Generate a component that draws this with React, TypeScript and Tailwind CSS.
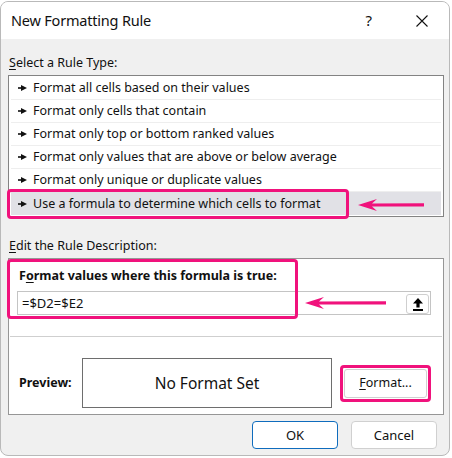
import React from 'react';

const PINK = '#f0127c';

const ruleTypes = [
  'Format all cells based on their values',
  'Format only cells that contain',
  'Format only top or bottom ranked values',
  'Format only values that are above or below average',
  'Format only unique or duplicate values',
  'Use a formula to determine which cells to format',
];

function Pointer() {
  return (
    <svg width="9" height="6" viewBox="0 0 9 6" className="shrink-0">
      <rect x="0" y="2.2" width="4" height="1.6" fill="#111" />
      <polygon points="3,0 9,3 3,6" fill="#111" />
    </svg>
  );
}

function PinkArrow({ width }: { width: number }) {
  return (
    <svg width={width} height="14" viewBox={`0 0 ${width} 14`}>
      <path
        d={`M0 7 L19 1 L14 5.4 L${width} 5.2 L${width} 8.6 L14 8.6 L19 13 Z`}
        fill={PINK}
      />
    </svg>
  );
}

function UploadIcon() {
  return (
    <svg width="10" height="13" viewBox="0 0 10 13">
      <polygon points="5,0 10,5.5 6.6,5.5 6.6,9.5 3.4,9.5 3.4,5.5 0,5.5" fill="#000" />
      <rect x="0" y="11" width="10" height="2" fill="#000" />
    </svg>
  );
}

export default function App() {
  return (
    <div
      className="w-[452px] h-[458px] bg-white pt-[1px] relative overflow-hidden"
      style={{ fontFamily: '"Noto Sans", "Open Sans", sans-serif' }}
    >
      <div className="w-[450px] h-[455px] rounded-[8px] border border-[#b9b9b9] overflow-hidden bg-[#f0f0f0] flex flex-col text-[#111]">
        {/* title bar */}
        <div className="h-[37px] bg-white flex items-center pl-[10px] shrink-0">
          <span className="text-[14.5px] tracking-[-0.2px]">New Formatting Rule</span>
          <span className="ml-auto mr-[44px] text-[15px]">?</span>
          <svg width="12" height="12" viewBox="0 0 12 12" className="mr-[21px]">
            <path d="M0.5 0.5 L11.5 11.5 M11.5 0.5 L0.5 11.5" stroke="#111" strokeWidth="1.1" />
          </svg>
        </div>

        <div className="px-[7px] flex flex-col text-[12.5px] leading-[16px]">
          <div className="mt-[16px] pl-[1px]">
            <span className="underline underline-offset-2">S</span>elect a Rule Type:
          </div>

          {/* rule type list */}
          <div className="relative mt-[4px] w-[436px] h-[142px] bg-white border border-[#838383] px-[2px] pt-[1px]">
            {ruleTypes.map((t, i) => (
              <div
                key={t}
                className={`h-[23px] flex items-center gap-[6px] pl-[7px] ${
                  i === ruleTypes.length - 1 ? 'bg-[#e1e1e6]' : 'border-b border-[#eeeeee]'
                }`}
              >
                <Pointer />
                <span>{t}</span>
              </div>
            ))}
            <div
              className="absolute left-[-2px] top-[113px] w-[342px] h-[30px] rounded-[4px] border-[3px]"
              style={{ borderColor: PINK }}
            />
            <div className="absolute left-[349px] top-[122px]">
              <PinkArrow width={66} />
            </div>
          </div>

          <div className="mt-[21px] pl-[1px]">
            <span className="underline underline-offset-2">E</span>dit the Rule Description:
          </div>

          {/* rule description panel */}
          <div className="relative mt-[4px] w-[436px] h-[157px] bg-white border border-[#969696] flex flex-col">
            <div className="mt-[9px] ml-[10px] font-bold">
              F<span className="underline underline-offset-2">o</span>rmat values where this formula is true:
            </div>
            <div className="mt-[7px] ml-[8px] w-[414px] h-[24px] border border-[#c4c4c4] flex items-center pl-[4px] pr-[1px]">
              <span className="text-[13px]">=$D2=$E2</span>
              <div className="ml-auto w-[23px] h-[20px] rounded-[3px] border border-[#cfcfcf] bg-white flex items-center justify-center mt-[2px]">
                <UploadIcon />
              </div>
            </div>
            <div
              className="absolute left-[-2px] top-[0px] w-[291px] h-[60px] rounded-[4px] border-[3px]"
              style={{ borderColor: PINK }}
            />
            <div className="absolute left-[296px] top-[37px]">
              <PinkArrow width={81} />
            </div>

            <div className="mt-[21px] ml-[1px] mr-[1px] h-px bg-[#cfcfcf]" />

            <div className="mt-[21px] flex items-center">
              <span className="ml-[10px] w-[63px] font-bold">Preview:</span>
              <div className="w-[250px] h-[50px] border border-[#6e6e6e] flex items-center justify-center text-[15.5px]">
                No Format Set
              </div>
              <div
                className="ml-[8px] w-[91px] h-[37px] rounded-[4px] border-[3px] p-[1px] flex"
                style={{ borderColor: PINK }}
              >
                <div className="flex-1 rounded-[3px] border border-[#d0d0d0] bg-white flex items-center justify-center">
                  <span>
                    <span className="underline underline-offset-2">F</span>ormat...
                  </span>
                </div>
              </div>
            </div>
          </div>

          {/* dialog buttons */}
          <div className="mt-[6px] flex justify-end gap-[13px] pr-[5px]">
            <div className="w-[86px] h-[28px] rounded-[4px] border border-[#0f6cbd] bg-white flex items-center justify-center text-[13px]">
              OK
            </div>
            <div className="w-[86px] h-[28px] rounded-[4px] border border-[#d0d0d0] bg-white flex items-center justify-center text-[13px]">
              Cancel
            </div>
          </div>
        </div>
      </div>
    </div>
  );
}
